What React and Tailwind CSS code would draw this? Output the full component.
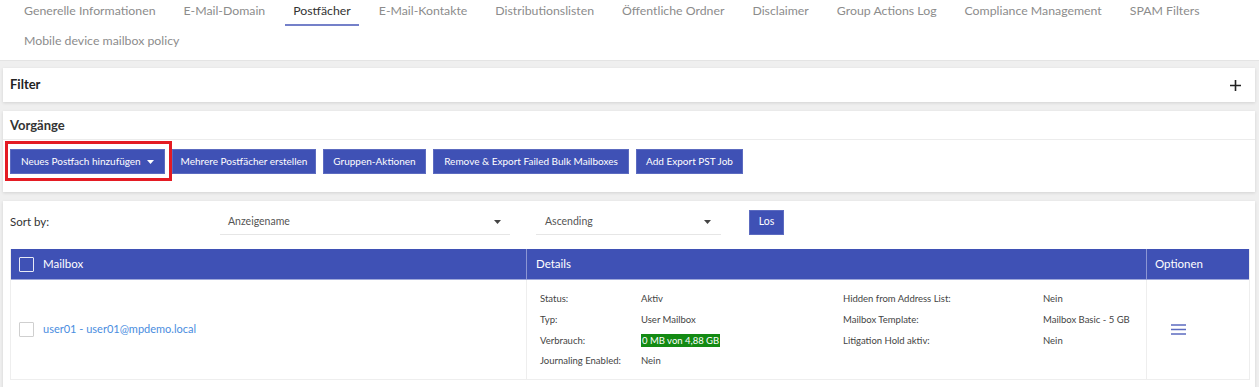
import React from "react";

const tabs = [
  "Generelle Informationen",
  "E-Mail-Domain",
  "Postfächer",
  "E-Mail-Kontakte",
  "Distributionslisten",
  "Öffentliche Ordner",
  "Disclaimer",
  "Group Actions Log",
  "Compliance Management",
  "SPAM Filters",
  "Mobile device mailbox policy",
];

function Caret({ className = "" }) {
  return (
    <svg width="7" height="4" viewBox="0 0 7 4" className={className}>
      <path d="M0 0h7L3.5 4z" fill="currentColor" />
    </svg>
  );
}

function Btn({ children, className = "" }) {
  return (
    <button className={"h-[25px] bg-[#3f51b5] text-white text-[10px] whitespace-nowrap flex items-center border border-[#5c6bc0] " + className}>
      {children}
    </button>
  );
}

export default function App() {
  const font = { fontFamily: "Lato, 'Open Sans', sans-serif" };
  return (
    <div className="w-[1259px] h-[387px] overflow-hidden bg-[#efefef]" style={font}>
      {/* Tabs */}
      <div className="bg-white border-b border-[#e4e4e4] pl-[10px] flex flex-wrap">
        {tabs.map((t) => (
          <div key={t} className="px-[6px] h-[30px]">
            <div
              className={
                "px-[8px] pt-[2px] pb-[4px] text-[12.3px] leading-[18px] whitespace-nowrap border-b-[2px] " +
                (t === "Postfächer" ? "text-[#333] border-[#7480c9]" : "text-[#8c8c8c] border-transparent")
              }
            >
              {t}
            </div>
          </div>
        ))}
      </div>

      <div className="px-[3px] pr-[4px] pt-[7px] flex flex-col gap-[9px]">
        {/* Filter */}
        <div className="bg-white h-[34px] flex items-center justify-between pl-[7px] pr-[14px] shadow-[0_1px_3px_rgba(0,0,0,0.12)]">
          <span className="text-[13px] font-bold text-[#222]">Filter</span>
          <svg width="11" height="11" viewBox="0 0 11 11">
            <path d="M5.5 0v11M0 5.5h11" stroke="#222" strokeWidth="1.6" />
          </svg>
        </div>

        {/* Vorgänge */}
        <div className="bg-white h-[81px] shadow-[0_1px_3px_rgba(0,0,0,0.12)]">
          <div className="h-[29px] border-b border-[#ececec] pl-[7px] flex items-center pt-[1px]">
            <span className="text-[13px] font-bold text-[#333]">Vorgänge</span>
          </div>
          <div className="pl-[7px] pt-[9px] flex gap-[7px]">
            <div className="relative">
              <Btn className="w-[155px] justify-between pl-[10px] pr-[10px]">
                <span>Neues Postfach hinzufügen</span>
                <Caret />
              </Btn>
              <div className="absolute -left-[5px] -top-[8px] w-[167px] h-[40px] border-[3px] border-[#e41b23] pointer-events-none" />
            </div>
            <Btn className="w-[144px] justify-center">Mehrere Postfächer erstellen</Btn>
            <Btn className="w-[103px] justify-center">Gruppen-Aktionen</Btn>
            <Btn className="w-[196px] justify-center">Remove &amp; Export Failed Bulk Mailboxes</Btn>
            <Btn className="w-[107px] justify-center">Add Export PST Job</Btn>
          </div>
        </div>

        {/* List */}
        <div className="bg-white h-[200px] pl-[7px] pr-[5px] shadow-[0_1px_3px_rgba(0,0,0,0.12)]">
          <div className="h-[48px] pb-[6px] flex items-center">
            <span className="w-[210px] text-[11.5px] text-[#333]">Sort by:</span>
            <div className="w-[290px] h-[25px] border-b border-[#e6e6e6] flex items-center justify-between pl-[8px] pr-[9px] text-[10.5px] text-[#555]">
              <span>Anzeigename</span>
              <Caret className="text-[#444]" />
            </div>
            <div className="w-[185px] h-[25px] ml-[26px] border-b border-[#e6e6e6] flex items-center justify-between pl-[9px] pr-[10px] text-[10.5px] text-[#555]">
              <span>Ascending</span>
              <Caret className="text-[#444]" />
            </div>
            <button className="ml-[28px] w-[35px] h-[25px] bg-[#3f51b5] border border-[#5c6bc0] text-white text-[10.5px]">Los</button>
          </div>

          {/* Table */}
          <div className="border-l border-r border-[#eeeeee]">
            <div className="h-[31px] bg-[#3f51b5] text-white text-[11.5px] flex border-b border-[#9fa8da]">
              <div className="w-[516px] border-r border-[#8c96d4] flex items-center pl-[8px] gap-[9px]">
                <span className="w-[15px] h-[15px] border-[1.5px] border-[#e8eaf6] rounded-[1px]" />
                <span>Mailbox</span>
              </div>
              <div className="w-[620px] border-r border-[#8c96d4] flex items-center pl-[9px]">Details</div>
              <div className="flex-1 flex items-center pl-[8px]">Optionen</div>
            </div>
            <div className="h-[100px] flex border-b border-[#eeeeee]">
              <div className="w-[516px] border-r border-[#eeeeee] flex items-center pl-[8px] gap-[9px]">
                <span className="w-[15px] h-[15px] border border-[#cfcfcf] rounded-[1px]" />
                <span className="text-[11px] text-[#4a8de0]">user01 - user01@mpdemo.local</span>
              </div>
              <div className="w-[620px] border-r border-[#eeeeee] pl-[13px] pt-[9px] text-[9.5px] text-[#444]">
                <div className="grid grid-cols-[101px_202px_200px_1fr] auto-rows-[20.7px] items-center">
                  <span>Status:</span><span>Aktiv</span><span>Hidden from Address List:</span><span>Nein</span>
                  <span>Typ:</span><span>User Mailbox</span><span>Mailbox Template:</span><span>Mailbox Basic - 5 GB</span>
                  <span>Verbrauch:</span>
                  <span><span className="bg-[#138a13] text-white px-[1px] py-[1px]">0 MB von 4,88 GB</span></span>
                  <span>Litigation Hold aktiv:</span><span>Nein</span>
                  <span>Journaling Enabled:</span><span>Nein</span><span></span><span></span>
                </div>
              </div>
              <div className="flex-1 flex items-center pl-[24px]">
                <svg width="15" height="11" viewBox="0 0 15 11">
                  <path d="M0 1h15M0 5.5h15M0 10h15" stroke="#5c6bc0" strokeWidth="1.6" />
                </svg>
              </div>
            </div>
          </div>
        </div>
      </div>
    </div>
  );
}
